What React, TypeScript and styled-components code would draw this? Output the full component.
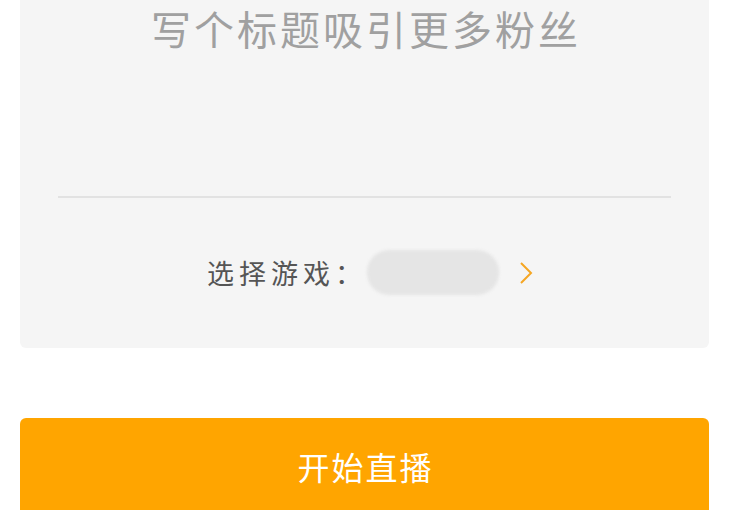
import React from 'react';
import styled, { createGlobalStyle } from 'styled-components';

const GlobalStyle = createGlobalStyle`
  html, body {
    margin: 0;
    padding: 0;
    background: #ffffff;
    font-family: "Noto Sans CJK SC", "Noto Sans", sans-serif;
  }
`;

const Page = styled.div`
  width: 730px;
  height: 510px;
  overflow: hidden;
  padding: 0 21px 0 20px;
  box-sizing: border-box;
`;

const Card = styled.div`
  background: #f5f5f5;
  border-radius: 0 0 6px 6px;
  display: flex;
  flex-direction: column;
`;

const TitleArea = styled.div`
  height: 196px;
  padding: 0 38px;
  display: flex;
  flex-direction: column;
`;

const TitleInput = styled.div`
  height: 56px;
  line-height: 56px;
  font-size: 40px;
  letter-spacing: 3px;
  color: #a0a0a0;
  text-align: center;
  padding-left: 3px;
`;

const Divider = styled.div`
  height: 1.5px;
  margin: 0 38px;
  background: #e2e2e2;
`;

const GameRow = styled.div`
  height: 150px;
  display: flex;
  align-items: center;
  justify-content: center;
  padding-left: 11px;
`;

const Label = styled.span`
  font-size: 27px;
  letter-spacing: 5px;
  color: #555555;
`;

const BlurredGame = styled.span`
  display: inline-block;
  width: 132px;
  height: 45px;
  border-radius: 22px;
  background: #e5e5e5;
  filter: blur(1.5px);
`;

const Chevron = styled.svg`
  margin-left: 20px;
  width: 14px;
  height: 24px;
`;

const StartButton = styled.button`
  margin-top: 70px;
  width: 100%;
  height: 100px;
  border: none;
  border-radius: 6px;
  background: #ffa500;
  color: #ffffff;
  font-family: "Noto Sans CJK SC", "Noto Sans", sans-serif;
  font-size: 32px;
  letter-spacing: 2px;
  padding: 25px 0 0 2px;
  display: flex;
  justify-content: center;
  align-items: flex-start;
  box-sizing: border-box;
`;

export default function App() {
  return (
    <>
      <GlobalStyle />
      <Page>
        <Card>
          <TitleArea>
            <TitleInput>写个标题吸引更多粉丝</TitleInput>
          </TitleArea>
          <Divider />
          <GameRow>
            <Label>选择游戏：</Label>
            <BlurredGame />
            <Chevron viewBox="0 0 14 24">
              <polyline points="2,2 12,12 2,22" fill="none" stroke="#f5a623" strokeWidth="2" />
            </Chevron>
          </GameRow>
        </Card>
        <StartButton>开始直播</StartButton>
      </Page>
    </>
  );
}
